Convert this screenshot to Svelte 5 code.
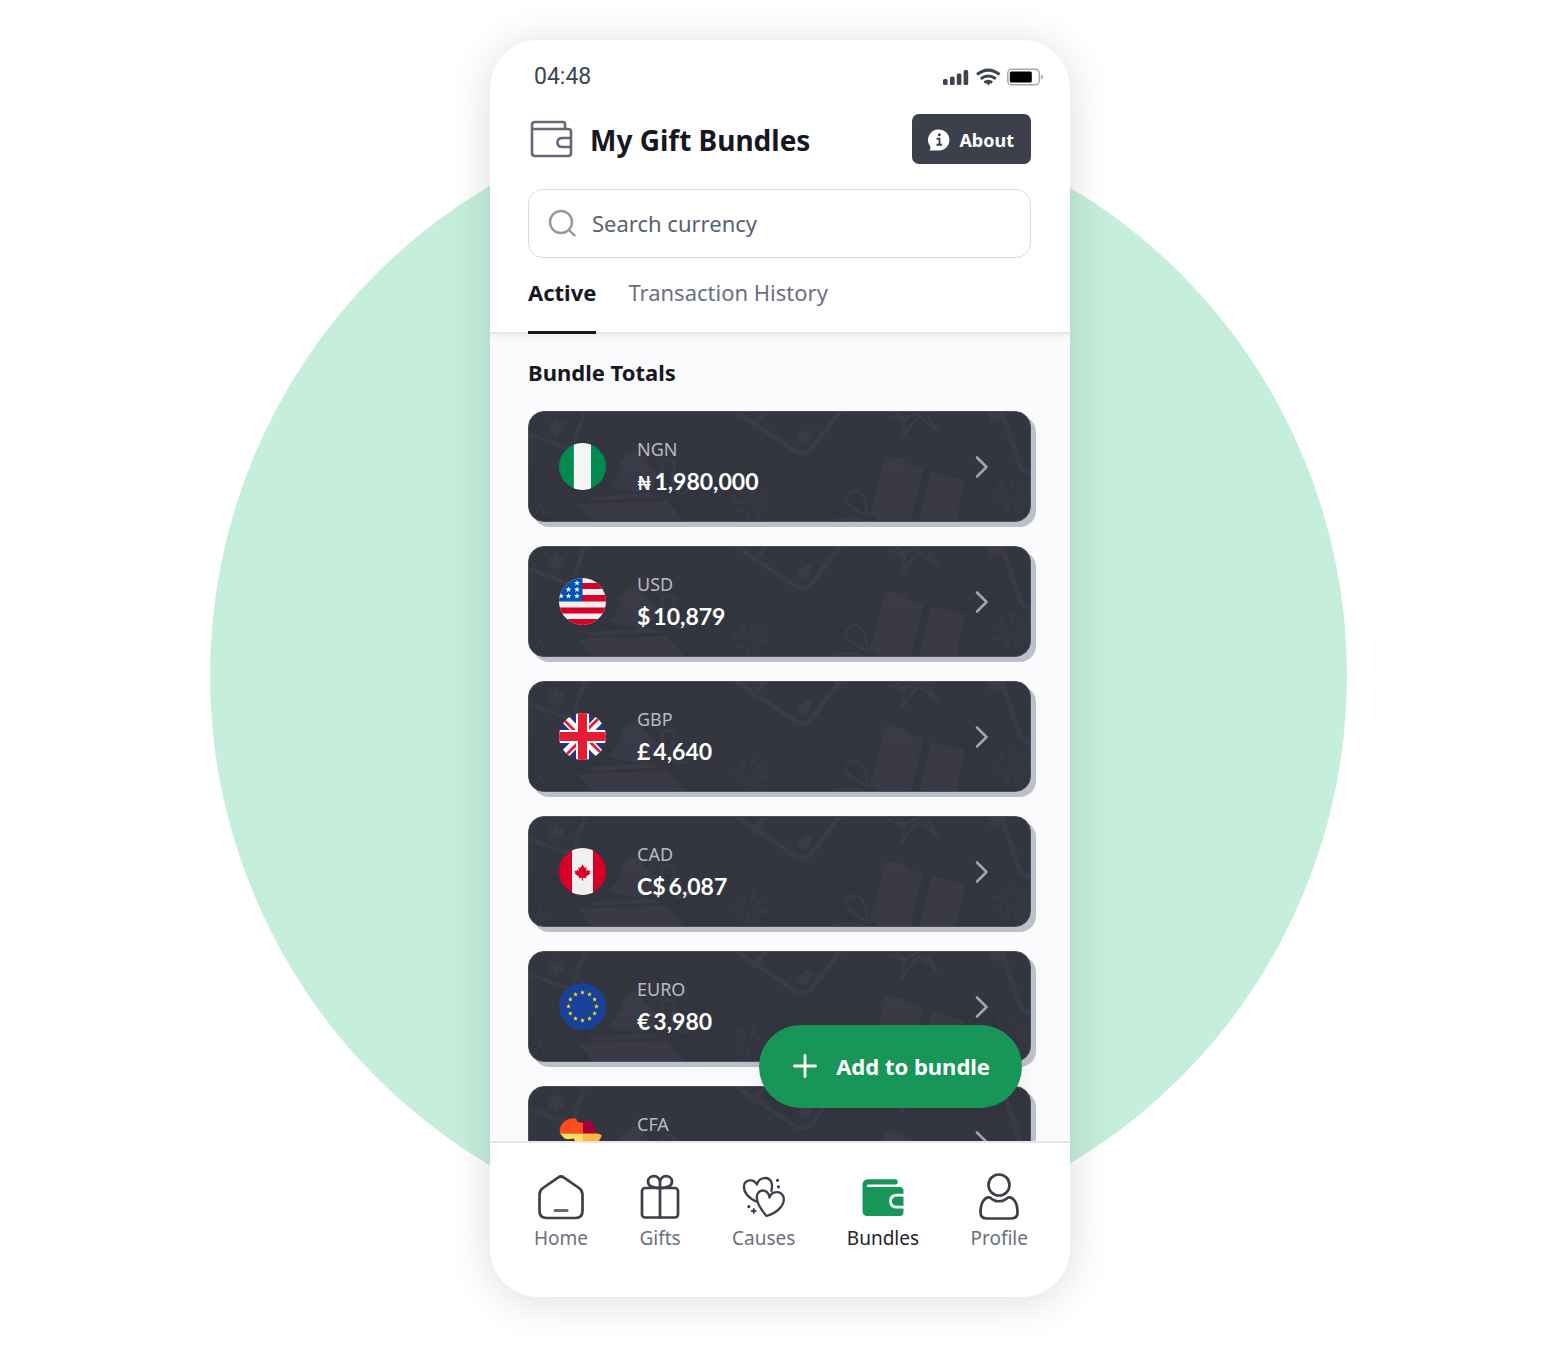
<script>
  const bundles = [
    { code: 'NGN', symbol: '₦', amount: '1,980,000' },
    { code: 'USD', symbol: '$', amount: '10,879' },
    { code: 'GBP', symbol: '£', amount: '4,640' },
    { code: 'CAD', symbol: 'C$', amount: '6,087' },
    { code: 'EURO', symbol: '€', amount: '3,980' },
    { code: 'CFA', symbol: '', amount: '' },
  ];

  const navItems = ['Home', 'Gifts', 'Causes', 'Bundles', 'Profile'];

  let query = $state('');
  let tab = $state('Active');
  let section = $state('Bundles');

  function star(cx, cy, outer, inner, points = 5) {
    let d = '';
    for (let i = 0; i < points * 2; i++) {
      const r = i % 2 ? inner : outer;
      const a = (Math.PI * i) / points - Math.PI / 2;
      d += `${i ? 'L' : 'M'}${(cx + r * Math.cos(a)).toFixed(2)} ${(cy + r * Math.sin(a)).toFixed(2)}`;
    }
    return d + 'Z';
  }

  function snowflake(cx, cy, r) {
    let d = '';
    const at = (len, a) => `${(cx + len * Math.cos(a)).toFixed(1)} ${(cy + len * Math.sin(a)).toFixed(1)}`;
    for (let i = 0; i < 8; i++) {
      const a = (Math.PI * i) / 4 + 0.2;
      d += `M${at(3, a)}L${at(r, a)}`;
      for (const f of [0.35, 0.6]) {
        d += `M${at(r * (f + 0.28), a - 0.26)}L${at(r * f, a)}L${at(r * (f + 0.28), a + 0.26)}`;
      }
    }
    return d;
  }

  const euStars = Array.from({ length: 12 }, (_, i) => {
    const a = (Math.PI * i) / 6;
    return star(23.5 + 14 * Math.sin(a), 23.5 - 14 * Math.cos(a), 2.5, 1.1);
  }).join('');

  const usStars = [
    [18, 5], [9.5, 11.5], [18, 11.5], [2, 18], [9.5, 18], [18, 18],
  ].map(([x, y]) => star(x, y, 3, 1.3)).join('');
</script>

{#snippet flag(code)}
  {#if code === 'CFA'}
    <svg class="flag-map" viewBox="0 0 47 47" aria-hidden="true">
      <clipPath id="africa">
        <path d="M.7 11C1.500 7 4 5 6 3C9 .5 13 0 17 .2L18.500 4L24 5L26 2.800Q30 1.500 33.500 5L37 14.600L42.700 17.300Q42 21 38 25Q34 29 34 34L30 42Q27 47 22 46L17 35L17.500 25L14.500 20.600Q9 22 5.500 20.600L1 15.600Z" />
      </clipPath>
      <g clip-path="url(#africa)">
        <path fill="#ff4b1f" d="M0 0h24v15.500H0z" />
        <path fill="#a8003a" d="M24 0h23v15.500H24z" />
        <path fill="#ffdc5b" d="M0 15.500h24V47H0z" />
        <path fill="#ffb43f" d="M24 15.500h23V47H24z" />
      </g>
    </svg>
  {:else}
    <svg class="flag" viewBox="0 0 47 47" aria-hidden="true">
      {#if code === 'NGN'}
        <path fill="#008a4f" d="M0 0h47v47H0z" />
        <path fill="#f5f5f5" d="M14.800 0h17.200v47H14.800z" />
      {:else if code === 'USD'}
        <path fill="#f0f0f0" d="M0 0h47v47H0z" />
        <path fill="#d80027" d="M23 5h24v6H23zM23 17h24v6.500H23zM0 29.500h47v6H0zM0 41h47v6H0z" />
        <path fill="#0052b4" d="M0 0h23.500v23.500H0z" />
        <path fill="#f0f0f0" d={usStars} />
      {:else if code === 'GBP'}
        <path fill="#29337a" d="M0 0h47v47H0z" />
        <path stroke="#fff" stroke-width="9" d="M0 0l47 47M47 0L0 47" />
        <path stroke="#e61c35" stroke-width="2.800" d="M0 2l20 20M27 25l20 20M45 0L25 20M22 27L2 47" />
        <path fill="#fff" d="M17 0h13v17h17v13H30v17H17V30H0V17h17z" />
        <path fill="#e61c35" d="M19 0h9v19h19v9H28v19h-9V28H0v-9h19z" />
      {:else if code === 'CAD'}
        <path fill="#d80027" d="M0 0h47v47H0z" />
        <path fill="#f0f0f0" d="M13 0h21v47H13z" />
        <path
          fill="#d80027"
          d="M23.500 16.500l2.200 3.600 2-1-.8 4 2.100-1.500.4 1.400 2.200-.3-1 2 1 .6-4.600 3.500.4 1.500-3.300-.5v2.700h-1.200v-2.700l-3.300.5.4-1.500-4.600-3.500 1-.6-1-2 2.200.3.4-1.400 2.100 1.500-.8-4 2 1z"
        />
      {:else}
        <path fill="#17419b" d="M0 0h47v47H0z" />
        <path fill="#f2da15" d={euStars} />
      {/if}
    </svg>
  {/if}
{/snippet}

{#snippet navIcon(name)}
  <svg class="nav-icon" viewBox="0 0 48 48" aria-hidden="true">
    {#if name === 'Home'}
      <path d="M21 4.600q3-2.200 6 0l15 10.400q3.500 2.500 3.500 6.500v16.500q0 7-7 7H9.500q-7 0-7-7V21.500q0-4 3.500-6.500z" />
      <path class="soft" d="M18 37.500h12" />
    {:else if name === 'Gifts'}
      <rect x="6" y="15" width="36" height="29.500" rx="3" />
      <path d="M24 15v29.500M24 15C17 15 12 13 12 8.500C12 2 24 .5 24 9.500V15C31 15 36 13 36 8.500C36 2 24 .5 24 9.500" />
    {:else if name === 'Causes'}
      <g class="fine">
        <path d="M17.500 29C9 26 3.500 19.500 4 13C4.600 6.500 13.500 5 17 11.500C19 3.500 29 3 31.500 9.500Q32.500 13 31.500 18" />
        <path d="M26.500 43C18 33 15 25 18 20C21.500 15.500 28.500 17.500 29.500 24.500C32 17.500 41 17.500 43.500 24C45.500 32 37 40 26.500 43Z" />
      </g>
      <path class="dots" d="M37.500 7.300h.01M38.500 13.800h.01M8.800 33.600h.01" />
      <path class="tiny" d="M13.700 36v4M11.700 38h4" />
    {:else if name === 'Bundles'}
      <path
        class="solid"
        d="M37 6.300H10Q3.500 6.300 3.500 12v26q0 5 5 5h32q4 0 4-4V18q0-4-4-4H9q-1.200 0-1.200-1.200t1.200-1.200H37q1.800-.4 1.800-2.600t-1.800-2.700z"
      />
      <path class="clasp" d="M46 22.200h-7.500q-7 0-7 6t7 6H46" />
    {:else}
      <circle cx="24" cy="12" r="10.500" />
      <path d="M15 24.500C20 29.500 28 29.500 33 24.500C38 23.500 42.500 29 42.500 39.500Q42.500 45.500 36 45.500H12Q5.500 45.500 5.500 39.500C5.500 29 10 23.500 15 24.500Z" />
    {/if}
  </svg>
{/snippet}

<div class="page">
  <div class="disc"></div>

  <main class="phone">
    <header class="top">
      <div class="status">
        <span>04:48</span>
        <svg class="status-icons" viewBox="0 0 101 18" aria-hidden="true">
          <g fill="#3d4550">
            <rect x="1" y="11" width="4.600" height="6" rx="1.500" />
            <rect x="8" y="8.500" width="4.600" height="8.500" rx="1.500" />
            <rect x="14.800" y="5.500" width="4.600" height="11.500" rx="1.500" />
            <rect x="21.600" y="2" width="4.600" height="15" rx="1.500" />
            <path d="M43 13.600h6.500l-3.200 4z" />
          </g>
          <g fill="none" stroke="#3d4550" stroke-width="3">
            <path d="M35 6.500Q46.300-2.200 57.500 6.500" />
            <path d="M38.800 10.800Q46.300 5.200 53.800 10.800" />
            <path d="M42.300 14.500Q46.300 12 50.200 14.500" />
          </g>
          <rect x="65.800" y="1.300" width="31.500" height="15.500" rx="4" fill="#fff" stroke="#a8a8a8" stroke-width="1.500" />
          <rect x="67.800" y="3.500" width="22" height="11" rx="1.500" fill="#000" />
          <path fill="#a8a8a8" d="M99 6.500q2 .5 2 2.500t-2 2.500z" />
        </svg>
      </div>

      <div class="heading">
        <svg class="wallet" viewBox="0 0 46 40" aria-hidden="true">
          <path d="M37 10V5q0-2-2-2H7Q4 3 4 6v28q0 3 3 3h33q3 0 3-3V12.500q0-2.500-3-2.500H4.500M43 19h-8.500q-5 0-5 4.500t5 4.500H43" />
        </svg>
        <h1>My Gift Bundles</h1>
        <button class="about" type="button">
          <svg viewBox="0 0 22 22" aria-hidden="true">
            <path fill="#fff" d="M11 .5A10.500 10.500 0 1 1 11 21.500H1.500Q2.800 20 2.300 17.500A10.500 10.500 0 0 1 11 .5z" />
            <circle cx="11.300" cy="5.800" r="1.500" fill="#3d3f4b" />
            <path fill="none" stroke="#3d3f4b" stroke-width="1.900" d="M8.500 9.600h3v6M8.500 15.700h5.500" />
          </svg>
          About
        </button>
      </div>

      <label class="search">
        <svg viewBox="0 0 28 28" aria-hidden="true">
          <circle cx="13" cy="13" r="11" />
          <path d="M21 21l5.500 5.500" />
        </svg>
        <input type="text" placeholder="Search currency" aria-label="Search currency" bind:value={query} />
      </label>

      <div class="tabs" role="tablist">
        {#each ['Active', 'Transaction History'] as name}
          <button
            type="button"
            role="tab"
            aria-selected={tab === name}
            class:current={tab === name}
            onclick={() => (tab = name)}>{name}</button>
        {/each}
      </div>
    </header>

    <section class="body">
      <h2>Bundle Totals</h2>
      <div class="list">
        {#each bundles as b}
          <a class="card" href={'#' + b.code}>
            <svg class="pattern" viewBox="0 0 503 111" preserveAspectRatio="xMidYMid slice" aria-hidden="true">
              <g fill="#3a3b46">
                <path d={star(28, 16, 11, 5.5, 6)} />
                <path d="M91 53l5-8 10-5 9 6 1 4 13 12-5 14-14 6-30-6 14-20z" />
                <path d="M58 86l63-4 12 5-70 3zM49 93l90-3 17 21H64z" />
                <path d="M358 45l20 3-1 4 19 6-13 53h-30l-11-7zM404 60l34 9-9 42h-38z" />
                <path d="M277 34l-7-5q-2-6 5-7 6-6 9-1 2 6-7 13z" />
                <path d="M460 0h20l-2 6-14 5z" />
              </g>
              <g fill="none" stroke="#3a3b46" stroke-width="3">
                <path d="M56 0L45 31M0 23l42 15" stroke-width="4" />
                <path d="M208 0l58 39q10 7 18-2l29-38M224 16L238 0" stroke-width="5" />
                <path d="M476 4l17 51q3 6 10 6" stroke-width="5" />
                <path d="M361 4l16 6-3 18 9-14 9-9 18 15-10-16M367 0l10 8 16-8" />
                <path d="M134 62q-2-12 5-13 9 1 7 9-6 12 2 22 8 5 14-3" />
                <path d="M340 106q-25-14-22-19 4-10 12-7 9 5 10 26zM306 110q18-5 30 0" />
              </g>
              <g class="faint" fill="none" stroke="#3a3b46" stroke-width="2">
                <path d="M3 110l14-28M9 90l6 12 12 2M22 90l-9 14" />
                <path d={snowflake(222, 93, 22)} />
                <path d={snowflake(482, 85, 22)} />
              </g>
            </svg>
            {@render flag(b.code)}
            <span class="info">
              <span class="code">{b.code}</span>
              <span class="amount">
                <span class:narrow={b.symbol === '₦'}>{b.symbol}</span>
                <span>{b.amount}</span>
              </span>
            </span>
            <svg class="chevron" viewBox="0 0 14 24" aria-hidden="true"><path d="M2 2.500l9.500 9.500L2 21.500" /></svg>
          </a>
        {/each}
      </div>
      <button class="add" type="button">
        <svg viewBox="0 0 24 24" aria-hidden="true"><path d="M12 1.500v21M1.500 12h21" /></svg>
        Add to bundle
      </button>
    </section>

    <nav>
      {#each navItems as name}
        <a href={'#' + name.toLowerCase()} class:current={section === name} onclick={() => (section = name)}>
          {@render navIcon(name)}
          {name}
        </a>
      {/each}
    </nav>
  </main>
</div>

<style>
  :global(body) {
    background: #fff;
  }

  .page {
    display: grid;
    grid-template: 100% / 100%;
    height: 100vh;
    min-height: 900px;
    overflow: hidden;
    font-family: 'Noto Sans', 'Open Sans', sans-serif;
    color: #17171f;
  }

  .page * {
    box-sizing: border-box;
  }

  .disc {
    grid-area: 1 / 1;
    place-self: center;
    width: 1137px;
    aspect-ratio: 1;
    margin-right: 3px;
    border-radius: 50%;
    background: #c6eedc;
  }

  .phone {
    grid-area: 1 / 1;
    justify-self: center;
    display: flex;
    flex-direction: column;
    width: min(580px, 100%);
    margin: 40px 0 53px;
    overflow: hidden;
    border-radius: 48px;
    background: #fff;
    box-shadow: 0 4px 44px rgb(0 0 0 / 14%);
    z-index: 1;
  }

  button,
  input {
    padding: 0;
    border: 0;
    background: none;
    color: inherit;
    font: inherit;
  }

  button {
    cursor: pointer;
  }

  a {
    color: inherit;
    text-decoration: none;
  }

  svg {
    flex: none;
  }

  .top {
    padding: 25px 39px 0 38px;
    border-bottom: 2px solid #e4e6ec;
    box-shadow: 0 2px 8px rgb(30 30 60 / 6%);
    z-index: 1;
  }

  .status {
    display: flex;
    align-items: center;
    justify-content: space-between;
    height: 24px;
    margin: 0 -12px 0 6px;
    font: 23px/24px Roboto, sans-serif;
    color: #3d4550;
  }

  .status-icons {
    width: 101px;
    height: 18px;
  }

  .heading {
    display: flex;
    align-items: center;
    margin-top: 25px;
  }

  .wallet {
    width: 46px;
    height: 40px;
    fill: none;
    stroke: #646879;
    stroke-width: 2.6;
    stroke-linejoin: round;
  }

  h1 {
    flex: 1;
    margin: 0 0 0 16px;
    padding-top: 2px;
    font-size: 28px;
    line-height: 40px;
  }

  .about {
    display: flex;
    align-items: center;
    gap: 9px;
    height: 50px;
    padding: 1px 17px 0 16px;
    border-radius: 7px;
    background: #3d3f4b;
    color: #fff;
    font-size: 18px;
    font-weight: 700;
  }

  .about svg {
    width: 22px;
    height: 22px;
  }

  .search {
    display: flex;
    align-items: center;
    gap: 16px;
    height: 69px;
    margin-top: 25px;
    padding: 0 19px 1px;
    border: 1px solid #d9dade;
    border-radius: 15px;
  }

  .search svg {
    width: 28px;
    height: 28px;
    fill: none;
    stroke: #96989e;
    stroke-width: 2.4;
    stroke-linecap: round;
  }

  .search input {
    flex: 1;
    min-width: 0;
    height: 40px;
    padding-bottom: 1px;
    outline: none;
    font-size: 22px;
  }

  .search input::placeholder {
    color: #566273;
    opacity: 1;
  }

  .tabs {
    display: flex;
    gap: 32px;
    margin: 19px 0 -2px;
  }

  .tabs button {
    padding-bottom: 24px;
    border-bottom: 3px solid transparent;
    color: #6b6f80;
    font-size: 22px;
    line-height: 30px;
  }

  .tabs .current {
    border-color: #17171f;
    color: #17171f;
    font-weight: 700;
  }

  .body {
    position: relative;
    flex: 1;
    min-height: 0;
    padding: 23px 39px 0 38px;
    overflow: hidden;
    background: #fbfbfe;
  }

  h2 {
    margin: 0 0 24px;
    font-size: 22px;
    line-height: 30px;
  }

  .list {
    display: grid;
    gap: 24px;
  }

  .card {
    position: relative;
    display: flex;
    align-items: center;
    height: 111px;
    padding: 0 41px 0 30px;
    border: 1px solid #4a4e5a;
    border-radius: 16px;
    background: #33353f;
    box-shadow: 5px 5px 0 #bcc1c9;
  }

  .pattern {
    position: absolute;
    inset: 0;
    width: 100%;
    height: 100%;
    border-radius: 15px;
  }

  .faint {
    opacity: 0.7;
  }

  .flag,
  .flag-map {
    position: relative;
    width: 47px;
    height: 47px;
  }

  .flag {
    overflow: hidden;
    border-radius: 50%;
  }

  .info {
    position: relative;
    display: grid;
    flex: 1;
    margin-left: 31px;
    padding-bottom: 2px;
  }

  .code {
    color: #b9bac6;
    font-size: 18px;
    line-height: 30px;
  }

  .amount {
    display: flex;
    align-items: baseline;
    gap: 3px;
    height: 34px;
    color: #fff;
    font: 700 23px/34px Lato, 'Noto Sans', sans-serif;
  }

  .narrow {
    font-size: 18px;
  }

  .chevron {
    position: relative;
    width: 14px;
    height: 24px;
    fill: none;
    stroke: #a3a4ab;
    stroke-width: 2.6;
    stroke-linecap: round;
    stroke-linejoin: round;
  }

  .add {
    position: absolute;
    right: 48px;
    bottom: 33px;
    display: flex;
    align-items: center;
    gap: 19px;
    height: 83px;
    padding: 0 32px 2px 34px;
    border-radius: 42px;
    background: #189658;
    box-shadow: 0 4px 20px rgb(0 0 0 / 6%);
    color: #fff;
    font-size: 22px;
    font-weight: 700;
  }

  .add svg {
    width: 24px;
    height: 24px;
    fill: none;
    stroke: #fff;
    stroke-width: 2.8;
    stroke-linecap: round;
  }

  nav {
    display: flex;
    justify-content: space-between;
    padding: 30px 42px 46px 44px;
    border-top: 2px solid #e4e6ec;
  }

  nav a {
    display: grid;
    justify-items: center;
    gap: 4px;
    color: #6b6f80;
    font-size: 19px;
    line-height: 26px;
  }

  nav .current {
    color: #23242c;
  }

  .nav-icon {
    width: 48px;
    height: 48px;
    margin: 0 -8px;
    fill: none;
    stroke: #3d3f4b;
    stroke-width: 2.7;
    stroke-linecap: round;
    stroke-linejoin: round;
  }

  .soft {
    stroke: #646879;
    stroke-width: 3;
  }

  .fine {
    stroke-width: 2.3;
  }

  .dots {
    stroke-width: 3.2;
  }

  .tiny {
    stroke-width: 1.8;
  }

  .solid {
    fill: #189658;
    stroke: none;
  }

  .clasp {
    stroke: #fff;
    stroke-width: 2.8;
  }
</style>
